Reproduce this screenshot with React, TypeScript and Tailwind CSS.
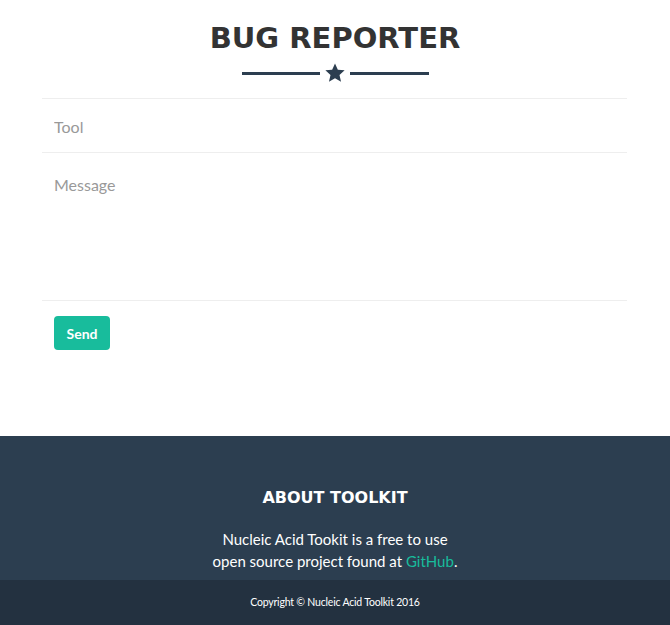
export default function App() {
  return (
    <div className="min-h-[625px] flex flex-col bg-white font-['Lato',sans-serif]">
      <section className="pt-[20px] pb-[86px]">
        <h2 className="text-center text-[29px] leading-[36px] font-bold text-[#333] font-['DejaVu_Sans',sans-serif]">
          BUG REPORTER
        </h2>
        <div className="mt-[7px] flex items-center justify-center gap-[4px] h-[20px]">
          <div className="w-[78px] h-[3px] bg-[#2c3e50]" />
          <svg viewBox="0 0 24 24" className="w-[22px] h-[22px]">
            <path
              d="M12 1.5l3.1 6.9 7.4.7-5.6 5 1.7 7.4L12 17.6l-6.6 3.9 1.7-7.4-5.6-5 7.4-.7z"
              fill="#2c3e50"
            />
          </svg>
          <div className="w-[79px] h-[3px] bg-[#2c3e50]" />
        </div>
        <form className="ml-[42px] mt-[15px] w-[585px]">
          <div className="border-t border-b border-[#eee]">
            <input
              className="block w-full h-[53px] px-[12px] pt-[2px] text-[16px] text-[#333] outline-none placeholder:text-[#999] bg-transparent"
              placeholder="Tool"
            />
          </div>
          <div className="border-b border-[#eee]">
            <textarea
              rows={5}
              className="block w-full h-[147px] px-[12px] pt-[20px] text-[16px] text-[#333] outline-none resize-none placeholder:text-[#999] bg-transparent"
              placeholder="Message"
            />
          </div>
          <div className="pt-[15px] px-[12px]">
            <button
              type="button"
              className="w-[56px] h-[34px] rounded-[4px] bg-[#18bc9c] text-white text-[14px] font-bold"
            >
              Send
            </button>
          </div>
        </form>
      </section>
      <footer className="text-white text-center">
        <div className="bg-[#2c3e50] pt-[50px] pb-[8px]">
          <h3 className="text-[16px] leading-[24px] font-bold font-['DejaVu_Sans',sans-serif]">
            ABOUT TOOLKIT
          </h3>
          <p className="mt-[18px] text-[15px] leading-[22px]">
            Nucleic Acid Tookit is a free to use
            <br />
            open source project found at <a className="text-[#18bc9c]">GitHub</a>.
          </p>
        </div>
        <div className="bg-[#233140] h-[45px] flex items-center justify-center text-[10.5px] tracking-[-0.2px]">
          Copyright © Nucleic Acid Toolkit 2016
        </div>
      </footer>
    </div>
  )
}
